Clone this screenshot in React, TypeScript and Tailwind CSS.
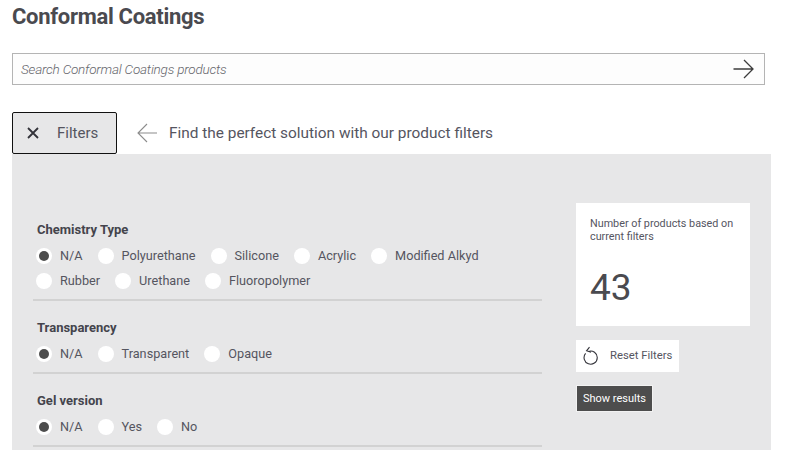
const font = "font-['Roboto','Noto_Sans',sans-serif]";

function Radio({ label, checked }: { label: string; checked?: boolean }) {
  return (
    <label className="flex items-center gap-2">
      <span className="flex h-4 w-4 items-center justify-center rounded-full bg-white">
        {checked && <span className="h-2.5 w-2.5 rounded-full bg-[#4d4d4d]" />}
      </span>
      <span className="text-[12.7px] leading-4 text-[#55555f]">{label}</span>
    </label>
  );
}

function FilterGroup({ title, options }: { title: string; options: string[] }) {
  return (
    <div className="border-b-2 border-[#d2d2d2] pb-[10px]">
      <div className="pl-[4px] text-[13px] leading-4 font-bold text-[#44444c]">{title}</div>
      <div className="mt-[10px] flex flex-wrap gap-x-[15px] gap-y-[9px] pl-[3px]">
        {options.map((o, i) => (
          <Radio key={o} label={o} checked={i === 0} />
        ))}
      </div>
    </div>
  );
}

export default function App() {
  return (
    <div className={`${font} h-[450px] w-[800px] overflow-hidden bg-white pl-3`}>
      <h1 className="pt-[3px] text-[22px] leading-[27px] font-bold tracking-[-0.3px] text-[#4a4a4f]">Conformal Coatings</h1>

      <div className="mt-[23px] flex h-8 w-[753px] items-center justify-between border border-[#b4b4b4] bg-[#fdfdfd] pr-[10px] pl-2">
        <span className="pt-[1px] text-[13.5px] font-light tracking-[-0.2px] text-[#66666c] italic">Search Conformal Coatings products</span>
        <svg width="21" height="20" viewBox="0 0 21 20" fill="none" stroke="#3c3c3c" strokeWidth="1.3">
          <path d="M0.5 10H20M11 1l9 9-9 9" />
        </svg>
      </div>

      <div className="mt-[27px] flex items-center">
        <button className="flex h-[42px] w-[105px] items-center rounded-[2px] border border-[#111] bg-[#e7e7e8] pl-[14px] text-[15px] text-[#55555f]">
          <svg width="12" height="12" viewBox="0 0 12 12" fill="none" stroke="#33333a" strokeWidth="1.8">
            <path d="M1 1l10 10M11 1 1 11" />
          </svg>
          <span className="ml-[18px]">Filters</span>
        </button>
        <svg className="ml-5" width="20" height="20" viewBox="0 0 20 20" fill="none" stroke="#8c8c8c" strokeWidth="1.1">
          <path d="M20 10H1M10 1l-9 9 9 9" />
        </svg>
        <span className="ml-[12px] pt-[1px] text-[15.4px] text-[#55555f]">Find the perfect solution with our product filters</span>
      </div>

      <div className="flex h-[296px] w-[759px] bg-[#e7e7e8] pt-[49px]">
        <div className="ml-[21px] flex w-[509px] flex-col gap-[19px] pt-[19px]">
          <FilterGroup
            title="Chemistry Type"
            options={["N/A", "Polyurethane", "Silicone", "Acrylic", "Modified Alkyd", "Rubber", "Urethane", "Fluoropolymer"]}
          />
          <FilterGroup title="Transparency" options={["N/A", "Transparent", "Opaque"]} />
          <FilterGroup title="Gel version" options={["N/A", "Yes", "No"]} />
        </div>

        <div className="ml-[34px] w-[174px]">
          <div className="h-[123px] bg-white px-[14px] pt-[14px]">
            <p className="text-[10.8px] leading-[13px] text-[#55555f]">Number of products based on current filters</p>
            <p className="mt-[20px] text-[37px] leading-[49px] text-[#4a4a4f]">43</p>
          </div>
          <button className="mt-[14px] flex h-8 w-[103px] items-center bg-white pl-[7px] text-[11.3px] text-[#55555f]">
            <svg width="15" height="20" viewBox="0 0 15 20" fill="none" stroke="#33333a" strokeWidth="1.1">
              <path d="M5.5 5.4A6.6 6.6 0 1 1 2.6 7.4M6.5 1.2 3.6 4.8l4.4 1.4" />
            </svg>
            <span className="ml-[12px]">Reset Filters</span>
          </button>
          <button className="mt-[13px] flex h-[27px] w-[77px] items-center justify-center border border-[#f2f2f2] bg-[#4d4d4d] pt-[2px] text-[11px] text-white">
            Show results
          </button>
        </div>
      </div>
    </div>
  );
}
